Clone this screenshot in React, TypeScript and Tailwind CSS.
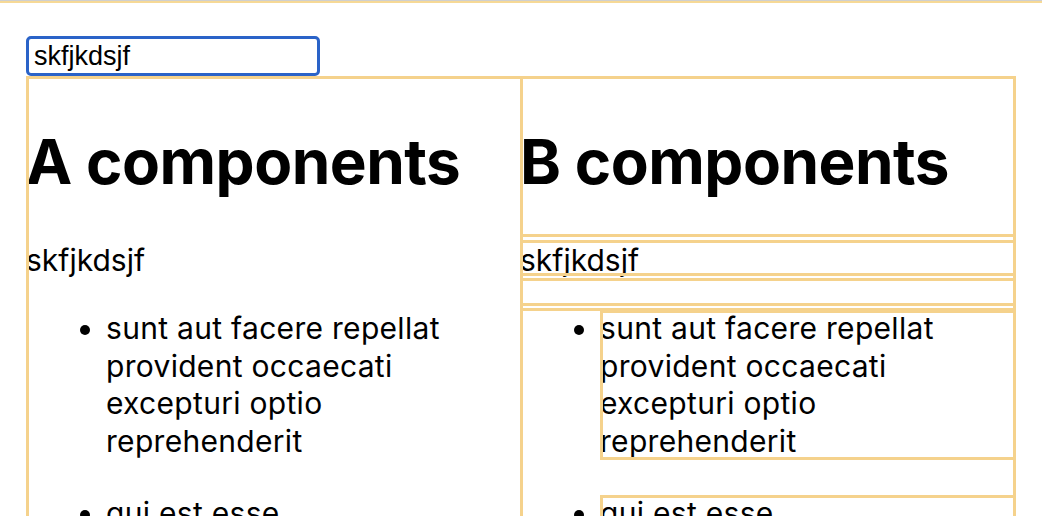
import React, { useState } from 'react';

const posts = [
  { id: 1, title: 'sunt aut facere repellat provident occaecati excepturi optio reprehenderit' },
  { id: 2, title: 'qui est esse' },
  { id: 3, title: 'ea molestias quasi exercitationem repellat qui ipsa sit aut' },
];

const ring = 'outline-[3px] -outline-offset-[3px] outline-[#f5d28c]';

function Column({ label, text, boxed }: { label: string; text: string; boxed: boolean }) {
  const r = boxed ? ring : '';
  return (
    <div className={`flex flex-col ${r}`}>
      <div className={`pt-[48px] pb-[37px] ${r}`}>
        <h1 className="text-[62px] leading-[76px] font-bold tracking-[-0.5px]">{label} components</h1>
      </div>
      <p className={`text-[30px] leading-[36px] h-[36px] pt-[2px] mt-[3px] ${r}`}>{text}</p>
      <div className={`h-[28px] mt-[2px] ${r}`} />
      <ul className={`list-disc pl-[80px] mt-[2px] text-[30px] leading-[37.5px] tracking-[0.3px] ${r}`}>
        {posts.map((p) => (
          <li key={p.id} className="mb-[33px] pt-[2px]">
            <div className={r}>{p.title}</div>
          </li>
        ))}
      </ul>
    </div>
  );
}

export default function App() {
  const [text, setText] = useState('skfjkdsjf');

  return (
    <div className="min-h-screen bg-white text-black font-['Inter','Liberation_Sans',sans-serif]">
      <div className="h-px bg-[#cfcfcf]" />
      <div className="h-[2px] bg-[#f6d996]" />
      <div className="pl-[26px] pt-[33px]">
        <input
          value={text}
          onChange={(e) => setText(e.target.value)}
          className="block w-[294px] h-[40px] px-[5px] text-[27px] border-[3px] border-[#2a63c8] rounded-[5px] outline-none font-['Liberation_Sans',sans-serif]"
        />
      </div>
      <div className={`ml-[26px] w-[990px] grid grid-cols-[494px_496px] ${ring}`}>
        <Column label="A" text={text} boxed={false} />
        <Column label="B" text={text} boxed />
      </div>
    </div>
  );
}
